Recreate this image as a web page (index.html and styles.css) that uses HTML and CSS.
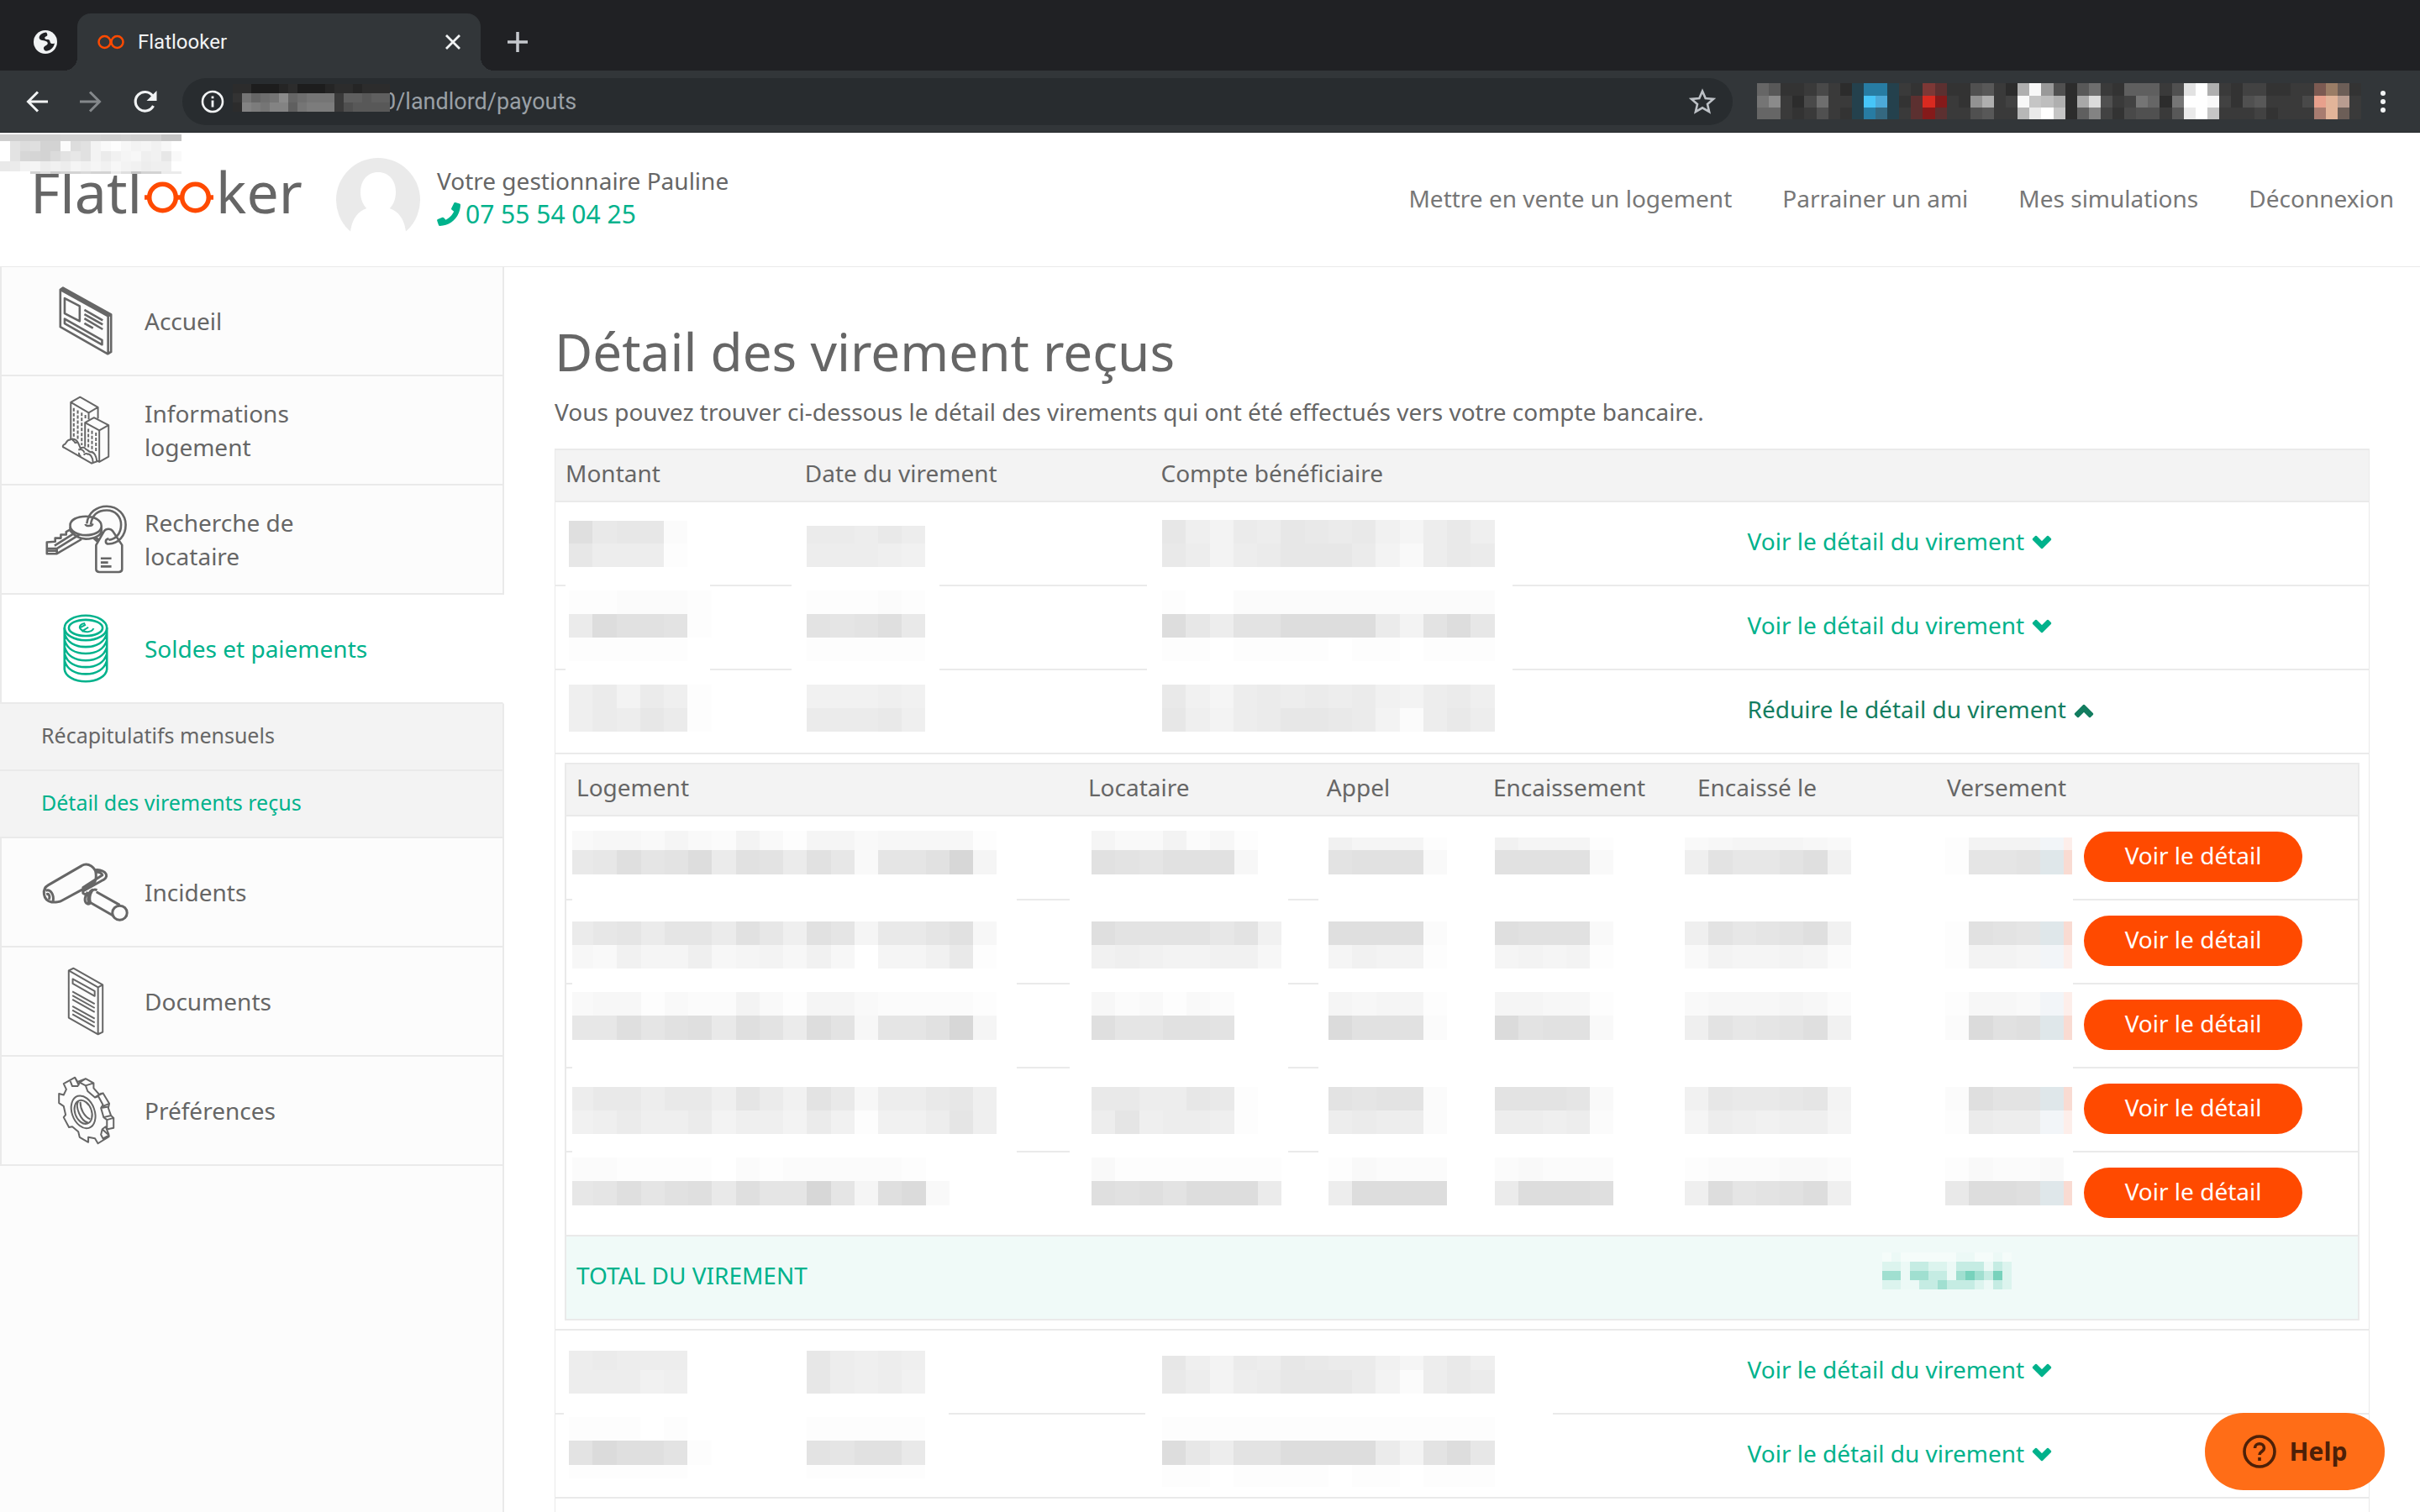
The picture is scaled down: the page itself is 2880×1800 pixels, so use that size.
FILE: index.html
```html
<!DOCTYPE html>
<html lang="fr">
<head>
<meta charset="utf-8">
<title>Flatlooker</title>
<link rel="stylesheet" href="styles.css">
</head>
<body>
<div class="tabstrip">
  <button class="pinned" aria-label="Onglet épinglé">
    <svg width="30" height="30" viewBox="0 0 30 30"><circle cx="15" cy="15" r="14" fill="#f1f3f4"/><path d="M16 3.500c-4 .5-6.500 2-8 4.500-1 2 0 3.500 1.500 4.500 2 1 5 .5 7 2s1.500 3.500-.5 4.500-3.500 2-3 4 2 3 4.500 2.500c4-1 7.500-4 8.500-9-1.500.5-3 1-4.500 0s-.5-3-2-4-4 0-5-1.500.5-2.500 2-3 1-3-.5-4.500z" fill="#202124"/></svg>
  </button>
  <div class="tab">
    <svg width="32" height="18" viewBox="0 0 32 18" fill="none" stroke="#ff4a00" stroke-width="2.500"><circle cx="8.500" cy="9" r="7"/><circle cx="23.500" cy="9" r="7"/></svg>
    <span class="tab-title">Flatlooker</span>
    <button class="tab-close" aria-label="Fermer l'onglet"><svg width="18" height="18" viewBox="0 0 18 18" stroke="#f1f3f4" stroke-width="2.800"><path d="M1 1l16 16M17 1L1 17"/></svg></button>
  </div>
  <button class="new-tab" aria-label="Nouvel onglet"><svg width="24" height="24" viewBox="0 0 24 24" stroke="#c5c8cd" stroke-width="3.500"><path d="M12 0v24M0 12h24"/></svg></button>
</div>
<div class="toolbar">
  <button aria-label="Précédent"><svg width="26" height="26" viewBox="0 0 26 26" fill="none" stroke="#f1f3f4" stroke-width="3"><path d="M26 13H3M14 1.500L2.500 13 14 24.500"/></svg></button>
  <button aria-label="Suivant"><svg width="26" height="26" viewBox="0 0 26 26" fill="none" stroke="#84888b" stroke-width="3"><path d="M0 13h23M12 1.500L23.500 13 12 24.500"/></svg></button>
  <button aria-label="Actualiser"><svg width="28" height="28" viewBox="0 0 28 28"><path d="M23.500 19A11.300 11.300 0 1 1 22.500 7" fill="none" stroke="#f1f3f4" stroke-width="3.200"/><path d="M27.500 1v12h-12z" fill="#f1f3f4"/></svg></button>
  <div class="omnibox">
    <svg width="28" height="28" viewBox="0 0 28 28"><circle cx="14" cy="14" r="12" fill="none" stroke="#f1f3f4" stroke-width="2.600"/><path d="M12.600 12.500h2.800v8h-2.800zM12.600 7.500h2.800v2.800h-2.800z" fill="#f1f3f4"/></svg>
    <span class="host" data-tone="dark" data-mosaic="-9,11,0,11:66444564445665666|2,11,0,11:7gefgjefggg8ddcdd|13,11,0,11:6ihgiidghhh8bcccc"></span>
    <input class="url" type="text" value="0/landlord/payouts" aria-label="Adresse">
    <button aria-label="Ajouter aux favoris"><svg width="32" height="32" viewBox="0 0 32 32" fill="none" stroke="#bdc1c6" stroke-width="2.600"><path d="M16 3.500l3.700 8.600 9.300.8-7 6.100 2.100 9.100-8.100-4.800-8.100 4.800 2.100-9.100-7-6.100 9.300-.8z"/></svg></button>
  </div>
  <div class="extensions" data-tone="dark" data-mosaic="6,15,8,14.1:ec778a86TDDT87MN77bc86oylb6cf87ddd8bvzo87997788PQR7|21,14,8,14.1:gj86af88TCET7NFG87ko89yrqo6nub89ge6gzzy97bc888aHIJ8|35,14,8,14.1:ee878b87TDKT8NGN88bc88pwzr6di97abb8cwzr88897888LIR8"></div>
  <button class="menu" aria-label="Menu"><svg width="6" height="28" viewBox="0 0 6 28" fill="#f1f3f4"><circle cx="3" cy="4" r="3"/><circle cx="3" cy="14" r="3"/><circle cx="3" cy="24" r="3"/></svg></button>
</div>

<div class="page">
  <header class="header" data-mosaic="2,8,0,12:oooooonnnnoonooott|10,12,0,12:0ehgmm2hf631465740|22,12,0,12:0eklmiecf6a75487c3|34,12,0,12:ba659795757467988|46,3,36,12:mgpmmjmmagtmmaa">
    <a class="logo" href="#" aria-label="Flatlooker">Flatl<svg width="82" height="38" viewBox="0 0 82 38" fill="none" stroke="#ff4a00" stroke-width="5.500"><circle cx="21.500" cy="19" r="15.800"/><circle cx="60.500" cy="19" r="15.800"/><path d="M37 19h8M0 19h5M77 19h5"/></svg>ker</a>
    <svg class="avatar" width="100" height="100" viewBox="0 0 100 100"><circle cx="50" cy="50" r="50" fill="#eaeaea"/><path d="M50 17c13 0 21 10 21 24S62 66 50 66 29 55 29 41s8-24 21-24z" fill="#fff"/><path d="M17 100V88c2-18 12-28 25-29h16c13 1 23 11 25 29v12z" fill="#fff"/></svg>
    <div class="manager">
      <div>Votre gestionnaire Pauline</div>
      <a class="phone" href="tel:0755540425"><svg width="28" height="28" viewBox="0 0 28 28" fill="#00b28c"><path d="M22 0l5 1.500c.7.300 1 .8 1 1.500C27.500 17 17 27.500 3.500 28c-.8 0-1.300-.3-1.500-1L.2 21.800c-.2-.8 0-1.400.8-1.700l5.500-2.300c.7-.3 1.200-.1 1.700.4l2.300 2.600c4-2 7.500-5.500 9.700-10l-2.500-2c-.6-.5-.8-1-.5-1.800L20.300.8C20.600.1 21.300-.2 22 0z"/></svg>07 55 54 04 25</a>
    </div>
    <nav class="topnav">
      <a href="#">Mettre en vente un logement</a><a href="#">Parrainer un ami</a><a href="#">Mes simulations</a><a href="#">Déconnexion</a>
    </nav>
  </header>

  <div class="body">
    <nav class="sidebar">
      <a class="item" href="#"><span class="icon"><svg width="62" height="80" viewBox="180 93 156 232" preserveAspectRatio="none"><path d="M182 101L190 95 334 187V316L324 323 182 230zM182 101L325 193V323M325 193L334 187M186 98L329 190M195 131L240 158V210L195 183zM195 202L307 275V291L195 218zM254 171L309 207M254 186L309 222M254 201L309 238M254 217L280 234"/></svg></span>Accueil</a>
      <a class="item" href="#"><span class="icon"><svg class="fine" width="56" height="80" viewBox="187 470 142 232" preserveAspectRatio="none"><path d="M213 618V490L241 472 295 507V546M213 490L267 526V549M267 526L295 507M256 643V560L283 543 327 569V678L299 696 289 690M256 560L299 587V696M299 587L327 569M213 620C202 616 199 632 196 634 187 638 188 645 192 646L276 701 292 694C290 676 284 660 273 662 266 660 262 652 258 652 256 646 250 644 242 648 238 640 236 622 224 618 220 616 215 616 213 620M218 620C222 624 226 626 226 632M226 632C232 626 236 628 236 634M236 654C246 650 252 658 254 664M238 664C236 672 242 676 244 678M262 668C272 668 280 680 280 698M252 672C256 666 264 666 266 672"/><path class="dash" d="M222 510V614M234 518V622M246 526V638M257 534V546M266 582V650M277 588V662M289 595V662"/></svg></span>Informations<br>logement</a>
      <a class="item" href="#"><span class="icon"><svg width="95" height="80" viewBox="138 848 240 232" preserveAspectRatio="none"><path d="M208 932L198 938V948H182V960H165V972L140 974V1014H170L244 964M140 996H170L240 946M140 1004H170M163 986L218 946M170 996V1014M210 916C210 896 232 885 257 885S304 898 304 918 282 950 257 950 210 936 210 916zM210 920V934C222 952 236 962 257 963 284 962 304 950 304 934V918M260 910C264 872 290 850 320 850 354 850 377 880 377 914 377 954 354 978 326 980M272 912C276 880 294 864 320 864 346 864 363 886 363 914 363 946 346 964 326 966M256 912C256 920 276 920 278 910M326 962C314 964 314 980 326 980M288 1068V984L312 936C318 926 332 926 338 936L366 984V1068C366 1074 362 1077 356 1077H298C292 1077 288 1074 288 1068zM280 960L292 972M286 958L296 966M302 1030H334M302 1044H324M302 1058H334"/></svg></span>Recherche de<br>locataire</a>
      <a class="item active" href="#"><span class="icon"><svg width="52" height="80" viewBox="192 1225 132 233" preserveAspectRatio="none"><ellipse cx="258" cy="1270" rx="64" ry="43"/><ellipse cx="258" cy="1270" rx="51" ry="28"/><path d="M194 1270V1414C196 1438 224 1456 258 1456S320 1438 322 1414V1270M194 1290C202 1320 226 1336 258 1336S314 1320 322 1290M194 1313C202 1343 226 1359 258 1359S314 1343 322 1313M194 1337C202 1367 226 1383 258 1383S314 1367 322 1337M194 1360C202 1390 226 1406 258 1406S314 1390 322 1360M194 1384C202 1414 226 1430 258 1430S314 1414 322 1384"/><path class="thin" d="M256 1254C240 1256 236 1268 244 1276 254 1288 276 1286 282 1272M238 1271L258 1259M246 1282L266 1268"/></svg></span>Soldes et paiements</a>
      <a class="subitem" href="#">Récapitulatifs mensuels</a>
      <a class="subitem current" href="#">Détail des virements reçus</a>
      <a class="item" href="#"><span class="icon"><svg class="bold" width="100" height="68" viewBox="132 535 252 183" preserveAspectRatio="none"><path d="M146 604L246 542C264 530 290 546 289 574 289 590 286 596 276 602L186 654C176 660 164 659 156 659 128 652 126 616 146 604zM138 622C152 616 164 634 160 656M140 634C148 630 152 640 148 650M286 556C300 552 322 562 320 576 318 584 312 588 306 590L252 622 250 612 284 590M288 562C300 562 306 566 308 572L256 608M250 622V630L258 634M272 660L340 702M290 626L360 668M264 626C256 638 252 656 260 662 264 666 270 664 274 660M280 618C264 626 262 648 268 664M292 620C284 616 280 618 276 624 270 634 268 650 272 660"/><ellipse cx="360" cy="693" rx="22" ry="23"/></svg></span>Incidents</a>
      <a class="item" href="#"><span class="icon"><svg class="fine" width="42" height="80" viewBox="205 871 106 215" preserveAspectRatio="none"><path d="M207 880L221 873 309 926V1077L295 1084 207 1031zM207 880L295 934V1084M295 934L309 926M219 907L285 946V962L219 922zM218 947L285 987M218 960L285 1000M218 973L285 1013M218 994L285 1034M218 1007L285 1047M218 1020L285 1060"/></svg></span>Documents</a>
      <a class="item" href="#"><span class="icon"><svg class="fine" width="67" height="80" viewBox="173 1222 169 216" preserveAspectRatio="none"><path d="M190 1244L224 1224 232 1238 256 1228 280 1242V1258L298 1280 308 1274 327 1308 324 1322 332 1346 340 1354V1386L322 1390 316 1382 306 1390 326 1410V1414L293 1436 284 1420 264 1416V1432L238 1416 234 1398 216 1382 206 1384 190 1352 196 1344 190 1316 176 1306V1276L190 1280 198 1262zM210 1236L216 1252 232 1252 238 1240 256 1250 262 1268 284 1288 294 1284 308 1312 302 1322 310 1352 320 1360V1388M238 1240L256 1228M256 1250L280 1242M284 1288L304 1274M308 1316L327 1308M302 1322L324 1318M320 1360L340 1354M310 1352L332 1346M306 1390L302 1408 308 1420 326 1410M316 1382L326 1408M224 1224L236 1250"/><ellipse cx="249" cy="1335" rx="34" ry="54" transform="rotate(-18 249 1335)"/><ellipse cx="249" cy="1335" rx="25" ry="39" transform="rotate(-18 249 1335)"/><path d="M240 1302C240 1326 252 1350 270 1358M234 1300C224 1316 240 1364 264 1370"/></svg></span>Préférences</a>
    </nav>

    <main class="content">
      <h1>Détail des virement reçus</h1>
      <p>Vous pouvez trouver ci-dessous le détail des virements qui ont été effectués vers votre compte bancaire.</p>
      <table class="payouts">
        <colgroup><col class="c-amount"><col class="c-date"><col class="c-account"><col></colgroup>
        <thead><tr><th>Montant</th><th>Date du virement</th><th>Compte bénéficiaire</th><th></th></tr></thead>
        <tbody>
          <tr>
            <td data-mosaic="22,27,16:gbcc2|49,28,16:c9991|77,28,12,172:0"></td>
            <td data-mosaic="28,21,14:aa9b9|49,28,14:99987|77,28,-4,176:0"></td>
            <td data-mosaic="21,28,14:c86a9cbab759b8|49,28,14:b969accca639ba|77,28,-4,435:0"></td>
            <td><a class="toggle" href="#">Voir le détail du virement <svg width="26" height="18" viewBox="0 0 26 18"><path d="M3 5l3-3 7 7 7-7 3 3-10 10z"/></svg></a></td>
          </tr>
          <tr>
            <td data-mosaic="5,28,16:112221|33,28,16:ahffe1|61,28,16:111110|89,28,12,172:0"></td>
            <td data-mosaic="5,28,14:11121|33,28,14:edegb|61,28,14:11111|89,28,-4,176:0"></td>
            <td data-mosaic="5,28,14:10022222222222|33,28,14:hc9eehhhha6ehc|61,28,14:11011110110111|89,28,-4,435:0"></td>
            <td><a class="toggle" href="#">Voir le détail du virement <svg width="26" height="18" viewBox="0 0 26 18"><path d="M3 5l3-3 7 7 7-7 3 3-10 10z"/></svg></a></td>
          </tr>
          <tr>
            <td data-mosaic="17,28,16:8a6a81|45,28,16:8a9ca1"></td>
            <td data-mosaic="17,28,14:77787|45,28,14:aaab8"></td>
            <td data-mosaic="17,28,14:b759a9a9a769a8|45,28,14:c869accba629b9"></td>
            <td><a class="toggle open" href="#">Réduire le détail du virement <svg width="26" height="18" viewBox="0 0 26 18"><path d="M3 13l3 3 7-7 7 7 3-3L13 3z"/></svg></a></td>
          </tr>
          <tr><td class="nest" colspan="4">
            <table class="details">
              <colgroup><col class="d-home"><col class="d-tenant"><col class="d-call"><col class="d-cashed"><col class="d-on"><col class="d-paid"><col></colgroup>
              <thead><tr><th>Logement</th><th>Locataire</th><th>Appel</th><th>Encaissement</th><th>Encaissé le</th><th>Versement</th><th></th></tr></thead>
              <tbody>
                <tr>
                  <td data-mosaic="17,23,7,25:3|17,23,32:44353263155344441|40,29,7,25:b|40,29,32:cgdehafeafc3ddfk5|69,40,7,529:0"></td>
                  <td data-mosaic="17,23,16:5336241|40,29,16:fedfff4|69,40,-10,260:0"></td>
                  <td data-mosaic="25,15,14:75551|40,29,14:efff3|69,40,2,898:0"></td>
                  <td data-mosaic="25,15,14:75551|40,29,14:ffff3"></td>
                  <td data-mosaic="25,15,-3:3455543|40,29,-3:8ecceg7"></td>
                  <td data-mosaic="25,15,10:1666LP|40,29,10:1ddeBR"></td>
                  <td><button class="pill">Voir le détail</button></td>
                </tr>
                <tr>
                  <td data-mosaic="25,28,7,25:a|25,28,32:cdaddafc8fd5bbdf4|53,28,7,25:4|53,28,32:375584564740557b1|81,28,7,529:0"></td>
                  <td data-mosaic="25,28,16:geeeece7|53,28,16:78766774|81,28,-10,260:0"></td>
                  <td data-mosaic="25,28,14:gggg2|53,28,14:57661|81,28,2,898:0"></td>
                  <td data-mosaic="25,28,14:gfff3|53,28,14:56561"></td>
                  <td data-mosaic="25,28,-3:8ecdeg7|53,28,-3:3655652"></td>
                  <td data-mosaic="25,28,10:1fedBR|53,28,10:1665LP"></td>
                  <td><button class="pill">Voir le détail</button></td>
                </tr>
                <tr>
                  <td data-mosaic="9,28,7,25:3|9,28,32:44132263155322221|37,29,7,25:c|37,29,32:cgdfgbgeahe4ddfk5|66,43,7,529:0"></td>
                  <td data-mosaic="9,28,16:423132|37,29,16:gddffe|66,43,-10,260:0"></td>
                  <td data-mosaic="9,28,14:54551|37,29,14:ifff2|66,43,2,898:0"></td>
                  <td data-mosaic="9,28,14:55441|37,29,14:ieff3"></td>
                  <td data-mosaic="9,28,-3:3444542|37,29,-3:8ecdeg7"></td>
                  <td data-mosaic="9,28,10:1443LP|37,29,10:2ifgBR"></td>
                  <td><button class="pill">Voir le détail</button></td>
                </tr>
                <tr>
                  <td data-mosaic="22,28,7,25:9|22,28,32:bb9bb8da7eb499bc8|50,28,7,25:7|50,28,32:8a88a6886a71779d8|78,28,7,529:0"></td>
                  <td data-mosaic="22,28,16:bb99cb1|50,28,16:9d89981|78,28,-10,260:0"></td>
                  <td data-mosaic="22,28,14:edee2|50,28,14:9a992|78,28,2,898:0"></td>
                  <td data-mosaic="22,28,14:eeed3|50,28,14:99892"></td>
                  <td data-mosaic="22,28,-3:7cbbcd6|50,28,-3:5987885"></td>
                  <td data-mosaic="22,28,10:2geeBR|50,28,10:1a99LP"></td>
                  <td><button class="pill">Voir le détail</button></td>
                </tr>
                <tr>
                  <td data-mosaic="6,28,7,25:2|6,28,32:21111021222221|34,29,7,25:c|34,29,32:dgdfgbgddkd5gi3"></td>
                  <td data-mosaic="6,28,16:31111111|34,29,16:gfgehhha"></td>
                  <td data-mosaic="6,28,14:13222|34,29,14:9hhhh"></td>
                  <td data-mosaic="6,28,14:23222|34,29,14:ahhhg"></td>
                  <td data-mosaic="6,28,-3:1222332|34,29,-3:8hdefh8"></td>
                  <td data-mosaic="6,28,10:13223|34,29,10:bhhgBR"></td>
                  <td><button class="pill">Voir le détail</button></td>
                </tr>
                <tr class="total">
                  <th colspan="4" scope="row">TOTAL DU VIREMENT</th>
                  <td colspan="3" data-mosaic="19,11,232,11:YXYYYYYYXXYYXY|30,11,232,11:VVXUUVVXUUUXUV|41,11,232,11:TTXTTUUXTWTUWV|52,11,232,11:VVXXUUTUUUVXUV"></td>
                </tr>
              </tbody>
            </table>
          </td></tr>
          <tr>
            <td data-mosaic="24,23,16:9a999|47,28,16:99978|75,28,10,458:0"></td>
            <td data-mosaic="24,23,14:c9898|47,28,14:c9897"></td>
            <td data-mosaic="30,17,14:c86a9cbaa759b8|47,28,14:b969accca629ba|75,28,-6,485:0"></td>
            <td><a class="toggle" href="#">Voir le détail du virement <svg width="26" height="18" viewBox="0 0 26 18"><path d="M3 5l3-3 7 7 7-7 3 3-10 10z"/></svg></a></td>
          </tr>
          <tr>
            <td data-mosaic="3,28,16:11101|31,29,16:eigge1|60,16,16:11111"></td>
            <td data-mosaic="3,28,14:11111|31,29,14:edffb|60,16,14:11111"></td>
            <td data-mosaic="3,28,14:11111111111111|31,29,14:hc9eehhhha6ehc|60,26,14:11011110110111"></td>
            <td><a class="toggle" href="#">Voir le détail du virement <svg width="26" height="18" viewBox="0 0 26 18"><path d="M3 5l3-3 7 7 7-7 3 3-10 10z"/></svg></a></td>
          </tr>
          <tr><td></td><td></td><td></td><td></td></tr>
        </tbody>
      </table>
    </main>
  </div>
  <button class="help"><svg width="40" height="40" viewBox="0 0 40 40" fill="none" stroke="#4d2008" stroke-width="3.600"><circle cx="20" cy="20" r="18"/><path d="M14.500 16c0-7 11-7 11 0 0 4-5.500 4-5.500 8"/><path d="M20 27v4"/></svg>Help</button>
</div>
<script src="mosaic.js"></script>
</body>
</html>
```
FILE: styles.css
```css
* { box-sizing: border-box; }
body {
  margin: 0;
  height: 100vh;
  display: flex;
  flex-direction: column;
  overflow: hidden;
  background: #fff;
  color: #666;
  font: 28px/40px "Noto Sans", sans-serif;
}
a { color: inherit; text-decoration: none; }
button { border: 0; padding: 0; background: none; font: inherit; color: inherit; display: flex; align-items: center; justify-content: center; }
svg { flex: none; display: block; }

/* browser frame */
.tabstrip { flex: none; display: flex; align-items: flex-end; height: 84px; background: #202124; color: #f1f3f4; font: 24px/32px Roboto, sans-serif; }
.pinned { width: 92px; height: 68px; padding-left: 16px; }
.tab { position: relative; display: flex; align-items: center; gap: 16px; width: 480px; height: 68px; padding: 0 24px; border-radius: 16px 16px 0 0; background: #323639; }
.tab::before, .tab::after { content: ""; position: absolute; bottom: 0; width: 16px; height: 16px; }
.tab::before { left: -16px; background: radial-gradient(circle at 0 0, transparent 16px, #323639 16px); }
.tab::after { right: -16px; background: radial-gradient(circle at 100% 0, transparent 16px, #323639 16px); }
.tab-title { flex: 1; }
.new-tab { width: 88px; height: 68px; }
.toolbar { flex: none; display: flex; align-items: center; height: 74px; padding: 0 41px 0 31px; background: #323639; border-bottom: 1px solid #25282b; }
.toolbar > button { margin-right: 38px; }
.toolbar > .menu { margin: 0; }
.omnibox { flex: 1; display: flex; align-items: center; height: 56px; margin: 0 21px 0 -8px; padding: 0 20px 0 22px; border-radius: 28px; background: #282c2f; }
.host { position: relative; width: 179px; height: 24px; margin-left: 10px; }
.url { flex: 1; min-width: 0; border: 0; padding: 0; background: none; color: #9aa0a6; font: 27px/36px Roboto, sans-serif; }
.extensions { position: relative; width: 726px; height: 56px; margin-right: 24px; }

/* header */
.page { position: relative; flex: 1; min-height: 0; display: flex; flex-direction: column; overflow: hidden; }
.header { flex: none; position: relative; display: flex; align-items: center; height: 160px; padding: 0 31px 0 36px; border-bottom: 1px solid #eaeaea; }
.logo { display: flex; align-items: baseline; gap: 3px; width: 364px; padding-bottom: 20px; font-size: 68px; line-height: 80px; }
.manager { margin-left: 20px; padding-bottom: 6px; }
.phone { display: flex; align-items: center; gap: 6px; color: #00b28c; font-size: 30px; }
.topnav { display: flex; gap: 60px; margin-left: auto; padding-bottom: 4px; color: #777; }

/* sidebar */
.body { flex: 1; min-height: 0; display: flex; }
.sidebar { flex: none; width: 600px; background: #fcfcfc; box-shadow: inset -2px 0 #eaeaea; }
.item, .subitem { display: flex; align-items: center; border: solid #eaeaea; }
.item { gap: 12px; height: 130px; padding: 0 0 0 42px; border-width: 0 2px 2px; }
.icon { flex: none; width: 116px; display: flex; justify-content: center; }
.icon svg { overflow: visible; }
.icon path, .icon ellipse { fill: none; stroke: #666; stroke-width: 2.6px; stroke-linejoin: round; vector-effect: non-scaling-stroke; }
.icon .fine path, .icon .fine ellipse { stroke-width: 2px; }
.icon .bold path, .icon .bold ellipse { stroke-width: 3px; }
.icon .fine .dash { stroke-dasharray: 4px 2px; }
.item.active { background: #fff; color: #00b28c; border-right-color: #fff; }
.active path, .active ellipse { stroke: #00b28c; }
.active .thin { stroke-width: 2px; }
.subitem { height: 80px; padding: 0 0 4px 49px; background: #f3f3f3; border-width: 0 2px 2px 0; font-size: 25px; }
.current { color: #00b28c; }

/* content */
.content { flex: 1; min-width: 0; padding: 60px 60px 0; }
h1 { margin: 0 0 12px; font-size: 62px; line-height: 80px; font-weight: 400; }
p { margin: 0 0 24px; }
table { width: 100%; table-layout: fixed; border-collapse: separate; border-spacing: 0; border: solid #eaeaea; border-width: 2px 1px 0; }
th, td { position: relative; height: 100px; padding: 0 12px 6px; border-bottom: 2px solid #eaeaea; text-align: left; font-weight: 400; vertical-align: middle; }
thead th { height: 62px; background: #f3f3f3; white-space: nowrap; }
.c-amount { width: 13.2%; }
.c-date { width: 19.63%; }
.c-account { width: 32.35%; }
.nest { padding: 10px 11px; }
.details { border-width: 2px 2px 0; }
.details tbody td { padding-bottom: 2px; }
.d-home { width: 28.56%; }
.d-tenant { width: 13.32%; }
.d-call { width: 9.29%; }
.d-cashed { width: 11.4%; }
.d-on { width: 13.93%; }
.d-paid { width: 7.65%; }
.toggle { display: flex; align-items: center; gap: 8px; color: #00b28c; }
.toggle svg { margin-top: 4px; }
.toggle path { fill: #00b28c; stroke: #00b28c; stroke-width: 2.5px; stroke-linejoin: round; }
.toggle.open { color: #137d60; }
.toggle.open path { fill: #137d60; stroke: #137d60; }
.pill { width: 260px; height: 60px; padding-bottom: 4px; border-radius: 30px; background: #ff4a00; color: #fff; }
.total th, .total td { background: #f0faf8; color: #00b28c; }
.mosaic { position: absolute; left: 0; top: 0; z-index: 1; overflow: visible; pointer-events: none; }
.help { position: absolute; right: 42px; bottom: 26px; z-index: 5; gap: 16px; width: 214px; height: 92px; border-radius: 46px; background: #ff6d17; color: #4d2008; font-size: 30px; font-weight: 700; }
```
FILE: mosaic.js
```js
// Draws the pixelated masks over private values.
// Each band reads "top,height,left,blockWidth:shades", bands are separated by "|".
const LIGHT = { B: '#dfe7ea', R: '#f9dbd2', L: '#f2f5f8', P: '#fdeeea', T: '#a0dfd0', U: '#c5ece3', V: '#dcf4ee', W: '#78d2bc', X: '#ecf9f6', Y: '#f5fcfa' };
const DARK = { T: '#24414d', D: '#277ca3', K: '#346880', C: '#46c5f8', E: '#4ca9d8', M: '#7d3836', N: '#5c3030', F: '#d92a20', G: '#851a1a', H: '#e8a08c', I: '#e2b499', J: '#b89c90', L: '#a87c70', P: '#7c5a52', Q: '#9a7d66', R: '#6c5e57' };
const NS = 'http://www.w3.org/2000/svg';
document.querySelectorAll('[data-mosaic]').forEach(host => {
  const dark = host.dataset.tone === 'dark';
  const palette = dark ? DARK : LIGHT;
  const svg = document.createElementNS(NS, 'svg');
  svg.setAttribute('class', 'mosaic');
  svg.setAttribute('width', '1');
  svg.setAttribute('height', '1');
  svg.setAttribute('shape-rendering', 'crispEdges');
  host.dataset.mosaic.split('|').forEach(band => {
    const [box, cells] = band.split(':');
    const [y, h, x, w = 28.25] = box.split(',').map(Number);
    [...cells].forEach((c, i) => {
      const v = parseInt(c, 36);
      const g = dark ? Math.round(v * 7.3) : 255 - v * 2;
      const rect = document.createElementNS(NS, 'rect');
      rect.setAttribute('x', x + i * w);
      rect.setAttribute('y', y);
      rect.setAttribute('width', !dark && (c === 'R' || c === 'P') ? 10 : w);
      rect.setAttribute('height', h);
      rect.setAttribute('fill', palette[c] || `rgb(${g},${g},${g})`);
      svg.append(rect);
    });
  });
  host.append(svg);
});
```
